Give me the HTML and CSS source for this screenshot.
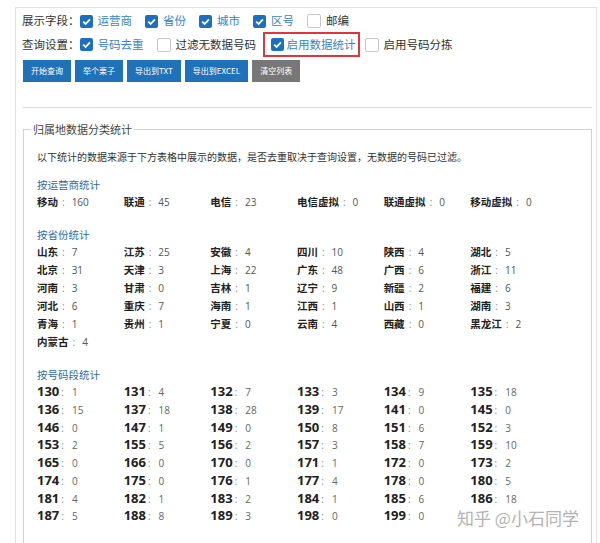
FILE: index.html
```html
<!DOCTYPE html>
<html lang="zh-CN">
<head>
<meta charset="utf-8">
<title>归属地查询</title>
<link rel="stylesheet" href="styles.css">
</head>
<body>
<div class="panel">
  <div class="row r1">
    <span class="lbl">展示字段：</span>
    <label class="cb on"><svg class="box" viewBox="0 0 13 13"><rect width="13" height="13" rx="2" fill="#1d6fbf"/><path d="M3.2 6.7 L5.6 9 L9.9 4.3" fill="none" stroke="#fff" stroke-width="1.8"/></svg>运营商</label>
    <label class="cb on"><svg class="box" viewBox="0 0 13 13"><rect width="13" height="13" rx="2" fill="#1d6fbf"/><path d="M3.2 6.7 L5.6 9 L9.9 4.3" fill="none" stroke="#fff" stroke-width="1.8"/></svg>省份</label>
    <label class="cb on"><svg class="box" viewBox="0 0 13 13"><rect width="13" height="13" rx="2" fill="#1d6fbf"/><path d="M3.2 6.7 L5.6 9 L9.9 4.3" fill="none" stroke="#fff" stroke-width="1.8"/></svg>城市</label>
    <label class="cb on"><svg class="box" viewBox="0 0 13 13"><rect width="13" height="13" rx="2" fill="#1d6fbf"/><path d="M3.2 6.7 L5.6 9 L9.9 4.3" fill="none" stroke="#fff" stroke-width="1.8"/></svg>区号</label>
    <label class="cb"><span class="box off"></span>邮编</label>
  </div>
  <div class="row r2">
    <span class="lbl">查询设置：</span>
    <label class="cb on"><svg class="box" viewBox="0 0 13 13"><rect width="13" height="13" rx="2" fill="#1d6fbf"/><path d="M3.2 6.7 L5.6 9 L9.9 4.3" fill="none" stroke="#fff" stroke-width="1.8"/></svg>号码去重</label>
    <label class="cb"><span class="box off"></span>过滤无数据号码</label>
    <label class="cb on hl"><svg class="box" viewBox="0 0 13 13"><rect width="13" height="13" rx="2" fill="#1d6fbf"/><path d="M3.2 6.7 L5.6 9 L9.9 4.3" fill="none" stroke="#fff" stroke-width="1.8"/></svg>启用数据统计</label>
    <label class="cb"><span class="box off"></span>启用号码分拣</label>
  </div>
  <div class="btns">
    <span class="btn">开始查询</span>
    <span class="btn">举个栗子</span>
    <span class="btn">导出到TXT</span>
    <span class="btn">导出到EXCEL</span>
    <span class="btn gray">清空列表</span>
  </div>
  <div class="sep"></div>
  <fieldset class="stats">
    <legend>归属地数据分类统计</legend>
    <p class="desc">以下统计的数据来源于下方表格中展示的数据，是否去重取决于查询设置，无数据的号码已过滤。</p>
    <h4 class="sh first">按运营商统计</h4>
    <div class="grid">
      <span class="it"><b>移动</b><i>:</i><em>160</em></span>
      <span class="it"><b>联通</b><i>:</i><em>45</em></span>
      <span class="it"><b>电信</b><i>:</i><em>23</em></span>
      <span class="it"><b>电信虚拟</b><i>:</i><em>0</em></span>
      <span class="it"><b>联通虚拟</b><i>:</i><em>0</em></span>
      <span class="it"><b>移动虚拟</b><i>:</i><em>0</em></span>
    </div>
    <h4 class="sh">按省份统计</h4>
    <div class="grid">
      <span class="it"><b>山东</b><i>:</i><em>7</em></span>
      <span class="it"><b>江苏</b><i>:</i><em>25</em></span>
      <span class="it"><b>安徽</b><i>:</i><em>4</em></span>
      <span class="it"><b>四川</b><i>:</i><em>10</em></span>
      <span class="it"><b>陕西</b><i>:</i><em>4</em></span>
      <span class="it"><b>湖北</b><i>:</i><em>5</em></span>
      <span class="it"><b>北京</b><i>:</i><em>31</em></span>
      <span class="it"><b>天津</b><i>:</i><em>3</em></span>
      <span class="it"><b>上海</b><i>:</i><em>22</em></span>
      <span class="it"><b>广东</b><i>:</i><em>48</em></span>
      <span class="it"><b>广西</b><i>:</i><em>6</em></span>
      <span class="it"><b>浙江</b><i>:</i><em>11</em></span>
      <span class="it"><b>河南</b><i>:</i><em>3</em></span>
      <span class="it"><b>甘肃</b><i>:</i><em>0</em></span>
      <span class="it"><b>吉林</b><i>:</i><em>1</em></span>
      <span class="it"><b>辽宁</b><i>:</i><em>9</em></span>
      <span class="it"><b>新疆</b><i>:</i><em>2</em></span>
      <span class="it"><b>福建</b><i>:</i><em>6</em></span>
      <span class="it"><b>河北</b><i>:</i><em>6</em></span>
      <span class="it"><b>重庆</b><i>:</i><em>7</em></span>
      <span class="it"><b>海南</b><i>:</i><em>1</em></span>
      <span class="it"><b>江西</b><i>:</i><em>1</em></span>
      <span class="it"><b>山西</b><i>:</i><em>1</em></span>
      <span class="it"><b>湖南</b><i>:</i><em>3</em></span>
      <span class="it"><b>青海</b><i>:</i><em>1</em></span>
      <span class="it"><b>贵州</b><i>:</i><em>1</em></span>
      <span class="it"><b>宁夏</b><i>:</i><em>0</em></span>
      <span class="it"><b>云南</b><i>:</i><em>4</em></span>
      <span class="it"><b>西藏</b><i>:</i><em>0</em></span>
      <span class="it"><b>黑龙江</b><i>:</i><em>2</em></span>
      <span class="it"><b>内蒙古</b><i>:</i><em>4</em></span>
    </div>
    <h4 class="sh">按号码段统计</h4>
    <div class="grid seg">
      <span class="it"><b>130</b><i>:</i><em>1</em></span>
      <span class="it"><b>131</b><i>:</i><em>4</em></span>
      <span class="it"><b>132</b><i>:</i><em>7</em></span>
      <span class="it"><b>133</b><i>:</i><em>3</em></span>
      <span class="it"><b>134</b><i>:</i><em>9</em></span>
      <span class="it"><b>135</b><i>:</i><em>18</em></span>
      <span class="it"><b>136</b><i>:</i><em>15</em></span>
      <span class="it"><b>137</b><i>:</i><em>18</em></span>
      <span class="it"><b>138</b><i>:</i><em>28</em></span>
      <span class="it"><b>139</b><i>:</i><em>17</em></span>
      <span class="it"><b>141</b><i>:</i><em>0</em></span>
      <span class="it"><b>145</b><i>:</i><em>0</em></span>
      <span class="it"><b>146</b><i>:</i><em>0</em></span>
      <span class="it"><b>147</b><i>:</i><em>1</em></span>
      <span class="it"><b>149</b><i>:</i><em>0</em></span>
      <span class="it"><b>150</b><i>:</i><em>8</em></span>
      <span class="it"><b>151</b><i>:</i><em>6</em></span>
      <span class="it"><b>152</b><i>:</i><em>3</em></span>
      <span class="it"><b>153</b><i>:</i><em>2</em></span>
      <span class="it"><b>155</b><i>:</i><em>5</em></span>
      <span class="it"><b>156</b><i>:</i><em>2</em></span>
      <span class="it"><b>157</b><i>:</i><em>3</em></span>
      <span class="it"><b>158</b><i>:</i><em>7</em></span>
      <span class="it"><b>159</b><i>:</i><em>10</em></span>
      <span class="it"><b>165</b><i>:</i><em>0</em></span>
      <span class="it"><b>166</b><i>:</i><em>0</em></span>
      <span class="it"><b>170</b><i>:</i><em>0</em></span>
      <span class="it"><b>171</b><i>:</i><em>1</em></span>
      <span class="it"><b>172</b><i>:</i><em>0</em></span>
      <span class="it"><b>173</b><i>:</i><em>2</em></span>
      <span class="it"><b>174</b><i>:</i><em>0</em></span>
      <span class="it"><b>175</b><i>:</i><em>0</em></span>
      <span class="it"><b>176</b><i>:</i><em>1</em></span>
      <span class="it"><b>177</b><i>:</i><em>4</em></span>
      <span class="it"><b>178</b><i>:</i><em>0</em></span>
      <span class="it"><b>180</b><i>:</i><em>5</em></span>
      <span class="it"><b>181</b><i>:</i><em>4</em></span>
      <span class="it"><b>182</b><i>:</i><em>1</em></span>
      <span class="it"><b>183</b><i>:</i><em>2</em></span>
      <span class="it"><b>184</b><i>:</i><em>1</em></span>
      <span class="it"><b>185</b><i>:</i><em>6</em></span>
      <span class="it"><b>186</b><i>:</i><em>18</em></span>
      <span class="it"><b>187</b><i>:</i><em>5</em></span>
      <span class="it"><b>188</b><i>:</i><em>8</em></span>
      <span class="it"><b>189</b><i>:</i><em>3</em></span>
      <span class="it"><b>198</b><i>:</i><em>0</em></span>
      <span class="it"><b>199</b><i>:</i><em>0</em></span>
    </div>
  </fieldset>
  <div class="mark">知乎 @小石同学</div>
</div>
</body>
</html>
```

FILE: styles.css
```css
* { box-sizing: border-box; }
body {
  margin: 0;
  background: #fff;
  font-family: "Noto Sans CJK SC", "Open Sans", sans-serif;
  color: #333;
}
.panel {
  position: relative;
  margin: 7px 0 0 15px;
  width: 582px;
  height: 560px;
  border: 1px solid #e2e2e2;
  border-bottom: none;
  padding: 1px 0 0 6px;
}
.row {
  display: flex;
  align-items: center;
  font-size: 11.5px;
  line-height: 1;
  white-space: nowrap;
}
.r1 { height: 24px; }
.r2 { height: 23px; }
.lbl { color: #333; }
.cb {
  display: inline-flex;
  align-items: center;
  gap: 5px;
  margin-right: 13px;
  color: #333;
}
.cb.on { color: #3585c8; }
.box {
  width: 13px;
  height: 13px;
  flex: none;
  display: block;
}
.box.off {
  border: 1px solid #c9c9c9;
  border-radius: 2px;
  background: #fff;
  width: 14px;
  height: 14px;
}
.hl {
  height: 25px;
  border: 2px solid #e0353a;
  padding: 0 2px 0 6px;
  margin: 0 5px 0 -6.5px;
  gap: 3px;
}
.btns {
  display: flex;
  gap: 4px;
  margin: 4px 0 0 1px;
}
.btn {
  display: block;
  height: 22px;
  line-height: 22px;
  padding: 0 8px;
  font-size: 8px;
  color: #fff;
  background: #1f72b9;
  white-space: nowrap;
}
.btn.gray { background: #777; }
.sep {
  margin-top: 25px;
  width: 570px;
  height: 1px;
  background: #dcdcdc;
}
.stats {
  margin: 14px 0 0 1px;
  width: 569px;
  min-width: 0;
  border: 1px solid #d2d2d2;
  padding: 0 13px 30px 13px;
}
.stats legend {
  font-size: 11px;
  line-height: 14px;
  padding: 0 2px;
  margin-left: -6px;
  color: #444;
}
.desc {
  margin: 14px 0 0;
  font-size: 10px;
  line-height: 14px;
  color: #333;
}
.sh {
  margin: 15px 0 0;
  font-size: 10.5px;
  line-height: 17px;
  font-weight: 400;
  color: #2c6ca6;
}
.sh.first { margin-top: 12px; }
.grid {
  display: grid;
  grid-template-columns: repeat(6, 86.67px);
  line-height: 17px;
}
.grid.seg { line-height: 16.75px; }
.it {
  white-space: nowrap;
  font-size: 10.5px;
}
.it b {
  font-weight: 700;
  color: #222;
  font-size: 10.5px;
}
.it i {
  font-style: normal;
  font-family: "Open Sans", sans-serif;
  color: #888;
  font-size: 10px;
  margin: 0 7px 0 4px;
}
.it em {
  font-style: normal;
  font-family: "Open Sans", sans-serif;
  color: #555;
  font-size: 10px;
}
.seg .it b {
  font-family: "Open Sans", sans-serif;
  font-size: 13px;
}
.seg .it i { margin: 0 8px 0 2px; }
.seg .it em { color: #666; }
.mark {
  position: absolute;
  left: 441px;
  top: 500px;
  font-size: 17px;
  line-height: 20px;
  color: #b3b3b3;
  white-space: nowrap;
}
```
